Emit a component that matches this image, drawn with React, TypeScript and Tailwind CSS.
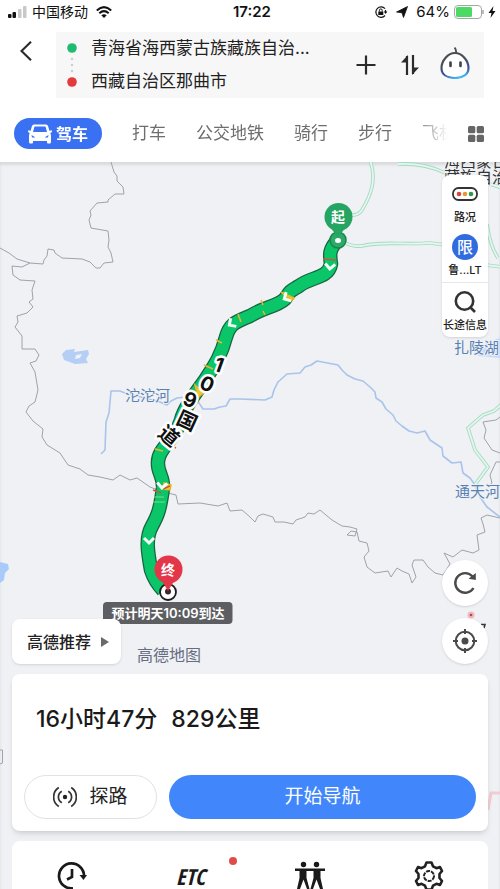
import React from "react";

const roads = [
  "M370 160 C377 180 371 195 362 210 Q358 216 350 215",
  "M344 242 Q352 247 362 246 C380 241 400 245 430 243 L446 245 L470 250",
  "M398 164 Q425 163 445 173 Q480 180 502 188",
  "M487 224 Q490 246 498 258 M486 265 L502 267",
  "M502 404 L494 411 L483 415 L468 428 L475 450 L488 467 L474 486",
];

const borders = [
  "M111 162 L114 172 L117 176 L117 181 L123 187 L124 194 L115 194 L108 200 L108 202 L97 203 L90 211 L91 215 L89 220 L91 228 L108 231 L109 240 L108 247 L111 253 L113 262 L104 263 L100 268 L96 268 L90 262 L82 259 L62 258 L55 253 L54 250 L48 249 L47 256 L44 260 L43 264 L30 263 L17 259 L9 253 L0 248",
  "M30 263 L22 267 L12 266 L13 275 L20 280 L35 281 L32 290 L33 299 L29 302 L33 307 L27 313 L17 316 L18 322 L15 327 L22 336 L22 349 L35 349 L39 355 L36 361 L30 363 L35 372 L38 390 L35 402 L29 406 L26 412 L33 421 L43 429 L42 437 L47 445 L60 453 L68 465 L80 469 L88 475 L100 477 L113 480 L120 475 L130 480 L137 478 L150 487 L160 491 L176 495 L178 504 L200 503 L218 506 L227 503 L230 511 L242 510 L250 517 L255 522 L258 516 L263 514 L273 517 L275 522 L284 522 L293 524 L296 520 L305 517 L308 513 L314 514 L320 510 L326 515 L332 520 L342 526 L350 527 L357 529 L355 536 L347 535 L351 531 L357 532 L359 541 L367 543 L369 551 L364 557 L367 567 L375 573 L388 571 L391 577 L397 568 L402 571 L409 574 L412 583 L416 577 L412 565 L414 560 L423 560 L428 567 L435 573 L443 575 L450 564 L444 553 L453 557 L462 550 L473 553 L479 550 L477 535 L485 532 L483 524 L481 518 L487 515 L500 518",
  "M500 417 L496 420 L483 422 L486 430 L484 438 L492 450 L500 453 M500 462 L496 462 L490 475 L492 483 L488 486",
  "M0 750 H2.500 V763 L0 764",
];

const river =
  "M101 454 L105 450 L106 422 L109 413 L111 391 L120 391 L125 393 L160 402 L167 405 L171 401 L177 398 L186 397 L197 400 L203 409 L214 409 L220 407 L226 406 L230 399 L240 399 L265 400 L272 397 L274 390 L278 382 L287 374 L300 373 L305 367 L311 365 L317 361 L338 365 L342 370 L347 375 L355 379 L363 381 L370 387 L375 392 L376 398 L382 402 L386 409 L393 415 L396 421 L402 426 L409 431 L417 433 L425 431 L430 440 L442 448 L443 456 L452 463 L461 462 L463 473 L470 478 L475 485 L480 497 L487 507 L500 517";

const route =
  "M338 240 C328 250 330 256 331 264 C328 279 312 276 299 286 C289 292 291 290 285 299 C276 307 264 307 250 316 C236 322 230 323 226 337 C220 360 211 370 205 380 C195 394 184 408 181 420 C175 440 158 448 158 462 C157 472 164 477 163 488 C160 510 158 515 152 526 C145 538 148 553 151 570 Q155 582 163 590";

const arrows = [
  { x: 330, y: 267, turn: 5 },
  { x: 286, y: 298, turn: 60 },
  { x: 231, y: 324, turn: 55 },
  { x: 162, y: 486, turn: 5 },
  { x: 149, y: 541, turn: 0 },
];

const roadName = [
  { char: "1", x: 219, y: 365, turn: 20 },
  { char: "0", x: 207, y: 384, turn: 25 },
  { char: "9", x: 190, y: 400, turn: 20 },
  { char: "国", x: 187, y: 421, turn: 25 },
  { char: "道", x: 169, y: 436, turn: 40 },
];

function MapCanvas() {
  return (
    <svg
      viewBox="0 162 500 727"
      preserveAspectRatio="xMidYMin slice"
      className="col-start-1 row-start-1 h-full w-full"
      fill="none"
      role="img"
      aria-label="路线地图"
    >
      <path d="M62 354 L66 350 L75 349 L74 352 L88 350 L89 354 L86 359 L88 363 L75 364 L64 360 Z" fill="#b5cef5" />
      <path d="M76 355 l6 -1 l-2 4 l-5 1z" fill="#eff1f5" />
      <path d="M0 562 L8 564 L9 569 L5 573 L4 580 L0 583 Z" fill="#a9cbfb" />
      <path d="M478 356 L482 346 L488 342 L500 338 V358 Z" fill="#c5dafb" />
      {borders.map((d) => (
        <path key={d} d={d} stroke="#9fa2a8" strokeWidth="1" strokeLinejoin="round" />
      ))}
      <path d={river} stroke="#a9c4ea" strokeWidth="1.6" strokeLinejoin="round" />
      {roads.map((d) => (
        <g key={d}>
          <path d={d} stroke="#a3dcc1" strokeWidth="3.6" />
          <path d={d} stroke="#e6f5ee" strokeWidth="1.8" />
        </g>
      ))}
      <path d="M488 810 L491 793 H500" stroke="#f0cdd2" strokeWidth="3" />

      <g fontSize="15" fill="#5a81b4" stroke="#eff1f5" strokeWidth="2" paintOrder="stroke">
        <text x="125" y="401">沱沱河</text>
        <text x="454" y="353">扎陵湖</text>
        <text x="455" y="497">通天河</text>
      </g>
      <g fontSize="16" fill="#333" stroke="#eff1f5" strokeWidth="2" paintOrder="stroke">
        <text x="444" y="167">海西蒙古族</text>
        <text x="444" y="183">藏族自治州</text>
      </g>
      <circle cx="471" cy="615" r="3.5" fill="#efb9bd" />
      <circle cx="471" cy="615" r="1.3" fill="#b5474f" />
      <path d="M481 624.500 H485 L484 628" stroke="#333" strokeWidth="1.5" />

      <path d={route} stroke="#176440" strokeWidth="14.5" strokeLinejoin="round" />
      <path d={route} stroke="#0ac668" strokeWidth="12" strokeLinejoin="round" />
      <g stroke="#e9b52c" strokeWidth="1.5">
        <path d="M261 300 l2 5 M263 311 l2 4 M238 314 l3 8 M216 340 l6 3 M204 365 l9 4 M155 449 l8 2" />
        <path d="M281 292 l13 6 l-3 3z M195 385 l9 8 l-6 4z M164 483 l7 2 l-1 5 l-7 -1z" fill="#f0c52f" />
      </g>
      <path d="M323 259 l13 1 M168 444 l8 4 M153 490 l8 3 M163 489 l7 -3" stroke="#c45a3b" strokeWidth="1.5" />
      <path d="M153 502 h12 M154 497 h10" stroke="#7ed98a" strokeWidth="1" />
      {arrows.map((a) => (
        <path
          key={a.y}
          transform={`translate(${a.x} ${a.y}) rotate(${a.turn})`}
          d="M-5 -3 L0 2 L5 -3"
          stroke="#f2fff7"
          strokeWidth="3"
        />
      ))}

      <g fontSize="20" fontWeight="700" fill="#111" stroke="#fff" strokeWidth="5" strokeLinejoin="round" paintOrder="stroke" textAnchor="middle">
        {roadName.map((l) => (
          <text key={l.char} transform={`translate(${l.x} ${l.y}) rotate(${l.turn})`} y="7">
            {l.char}
          </text>
        ))}
      </g>

      <circle cx="338" cy="240" r="8" fill="#2cab68" stroke="#17854a" strokeWidth="1.5" />
      <path d="M331 228 H345 L338 238 Z" fill="#26a562" />
      <circle cx="338.500" cy="217" r="14" fill="#26a562" />
      <ellipse cx="338" cy="240.500" rx="3" ry="2.500" fill="#fff" />
      <circle cx="168" cy="592" r="8" fill="#fff" stroke="#1b1b1d" strokeWidth="1.8" />
      <circle cx="168" cy="591.500" r="3" fill="#38282b" />
      <path d="M162 581 H174 L168 591 Z" fill="#e33648" />
      <circle cx="168.500" cy="569.500" r="14" fill="#e33648" />
      <g fontSize="14" fontWeight="700" fill="#fff" textAnchor="middle">
        <text x="338" y="222">起</text>
        <text x="168" y="575">终</text>
      </g>

      <rect x="103" y="602" width="129.500" height="22" rx="4" fill="#5c5e61" />
      <text x="168" y="618" fontSize="13" fontWeight="600" fill="#fff" textAnchor="middle">
        预计明天10:09到达
      </text>
    </svg>
  );
}

function StatusBar() {
  return (
    <div className="grid h-6 grid-cols-[1fr_auto_1fr] items-center pr-1 pl-2">
      <div className="flex items-center">
        <svg className="mr-1 h-3 w-5" viewBox="0 0 20 12" aria-hidden="true">
          <rect x="0" y="8" width="3.500" height="4" rx="1" fill="#111" />
          <rect x="4.500" y="6" width="3.500" height="6" rx="1" fill="#111" />
          <rect x="10" y="3" width="3.500" height="9" rx="1" fill="#c8c8c8" />
          <rect x="15" y="0" width="3.500" height="12" rx="1" fill="#c8c8c8" />
        </svg>
        <span className="text-sm">中国移动</span>
        <svg className="ml-2 h-3 w-4" viewBox="0 0 16 12" fill="none" stroke="#111" strokeWidth="2" aria-hidden="true">
          <path d="M0.800 4.500 Q8 -2.300 15.200 4.500 M3.300 7.200 Q8 3 12.700 7.200" />
          <path d="M5.300 9.300 Q8 7 10.700 9.300 L8 12 Z" fill="#111" stroke="none" />
        </svg>
      </div>
      <time className="text-[15px] font-semibold">17:22</time>
      <div className="flex items-center justify-end">
        <svg className="h-3 w-3.5" viewBox="0 0 14 12" fill="none" stroke="#111" strokeWidth="1.200" aria-hidden="true">
          <path d="M11 2.700 A5.200 5.200 0 1 0 11 9.500 M11.500 4 v2.600" />
          <path d="M9.800 5.500 h3.600 L11.600 8z" fill="#111" stroke="none" />
          <rect x="4.300" y="5.500" width="5" height="3.500" fill="#111" stroke="none" />
          <path d="M5.400 5.500 V4.300 a1.400 1.400 0 0 1 2.800 0 V5.500" strokeWidth="1" />
        </svg>
        <svg className="ml-2 h-3 w-3" viewBox="0 0 12 12" aria-hidden="true">
          <path d="M11.500 0.500 L7.500 11.500 L6 6.800 L0.500 6 Z" fill="#111" stroke="#111" strokeWidth="0.800" />
        </svg>
        <span className="ml-2 text-[15px]">64%</span>
        <svg className="ml-1 h-3.5 w-[30px]" viewBox="0 0 30 14" aria-hidden="true">
          <rect x="0.500" y="0.500" width="27" height="13" rx="3.500" fill="#fff" stroke="#a6a6a6" />
          <rect x="2" y="2" width="16" height="10" rx="1.500" fill="#4cd964" />
          <path d="M29 5 v4" stroke="#a6a6a6" strokeWidth="1.500" />
        </svg>
        <svg className="ml-1 h-3 w-2" viewBox="0 0 8 12" aria-hidden="true">
          <path d="M5.500 0 L0.500 7 H3.500 L2.500 12 L7.500 5 H4.500 Z" fill="#111" />
        </svg>
      </div>
    </div>
  );
}

function RouteHeader() {
  return (
    <div className="mt-2 flex pr-4">
      <button aria-label="返回" className="flex h-[38px] w-14 shrink-0 items-center justify-center pr-1">
        <svg className="h-5 w-3" viewBox="0 0 12 20" fill="none" stroke="#2b2b2b" strokeWidth="2.200" aria-hidden="true">
          <path d="M11 0.800 L1.500 10 L11 19.200" />
        </svg>
      </button>
      <div className="flex h-[66px] min-w-0 flex-1 items-center bg-[#f7f7f7] pr-3.5 pl-[11px]">
        <svg className="h-11 w-2.5 shrink-0" viewBox="0 0 10 44" aria-hidden="true">
          <circle cx="5" cy="5" r="4.800" fill="#1fbb70" />
          <g fill="#cfcfcf">
            <circle cx="5" cy="16" r="1.300" />
            <circle cx="5" cy="22" r="1.300" />
            <circle cx="5" cy="28" r="1.300" />
          </g>
          <circle cx="5" cy="39" r="4.800" fill="#e33b3b" />
        </svg>
        <div className="ml-3.5 flex min-w-0 flex-1 flex-col text-[17px] leading-[33px] text-[#222]">
          <button className="truncate text-left">青海省海西蒙古族藏族自治...</button>
          <button className="truncate text-left">西藏自治区那曲市</button>
        </div>
        <div className="flex shrink-0 items-center">
          <button aria-label="添加途经点">
            <svg className="h-5 w-5" viewBox="0 0 20 20" stroke="#2b2b2b" strokeWidth="2.200" aria-hidden="true">
              <path d="M10 0.500 V19.500 M0.500 10 H19.500" />
            </svg>
          </button>
          <button aria-label="交换起终点" className="ml-6">
            <svg className="h-5 w-5" viewBox="0 0 20 20" fill="none" stroke="#2b2b2b" strokeWidth="2.200" aria-hidden="true">
              <path d="M7 20 V1 M13 0 V19" />
              <path d="M8 0 V7.500 H1 Z M12 20 V12.500 H19 Z" fill="#2b2b2b" stroke="none" />
            </svg>
          </button>
          <button aria-label="语音助手" className="ml-5 pb-1">
            <svg className="h-8 w-[30px]" viewBox="0 0 30 32" fill="none" aria-hidden="true">
              <defs>
                <linearGradient id="botEdge" x1="0.300" y1="0" x2="0.600" y2="1">
                  <stop offset="0.350" stopColor="#4c4e55" />
                  <stop offset="0.750" stopColor="#3d51a4" />
                  <stop offset="1" stopColor="#45baf0" />
                </linearGradient>
              </defs>
              <path d="M14.500 0.500 Q16.500 2.500 16 6" stroke="#4c4e55" strokeWidth="1.800" />
              <path d="M15 6 C22 6 28.500 13.500 28.500 21 C28.500 27.500 23 31 15 31 C7 31 1.500 27.500 1.500 21 C1.500 13.500 8 6 15 6 Z" fill="#fff" stroke="url(#botEdge)" strokeWidth="2.200" />
              <path d="M10.500 15.500 v3.500 M20.500 15.500 v3.500" stroke="#3c4048" strokeWidth="2.600" strokeLinecap="round" />
            </svg>
          </button>
        </div>
      </div>
    </div>
  );
}

function TravelModes() {
  return (
    <div className="mt-5 flex items-center pr-4 pb-[13px] pl-3.5">
      <nav className="flex min-w-0 flex-1 items-center gap-[30px] overflow-hidden mask-[linear-gradient(to_right,#000_calc(100%-34px),transparent)] text-[17px] whitespace-nowrap text-[#6e6e6e]">
        <button className="flex h-[31px] shrink-0 items-center gap-1 rounded-full bg-[#3a70f2] px-3.5 text-base font-semibold text-white">
          <svg className="h-5 w-6" viewBox="0 0 24 20" aria-hidden="true">
            <path
              fillRule="evenodd"
              fill="#fff"
              d="M6 0.500 H18 Q19.500 0.500 20 2 L21.500 7 L23.500 6 L24 8 L22.300 9 Q23 10 23 12 V18 Q23 19.500 21.500 19.500 H20 Q19 19.500 19 18 V17 H5 V18 Q5 19.500 4 19.500 H2.500 Q1 19.500 1 18 V12 Q1 10 1.700 9 L0 8 L0.500 6 L2.500 7 L4 2 Q4.500 0.500 6 0.500 Z M6.500 2.500 L5 8 H19 L17.500 2.500 Z M3.500 11 L4 13.500 H7.500 Z M20.500 11 L20 13.500 H16.500 Z"
            />
          </svg>
          驾车
        </button>
        <button className="shrink-0">打车</button>
        <button className="shrink-0">公交地铁</button>
        <button className="shrink-0">骑行</button>
        <button className="shrink-0">步行</button>
        <button className="shrink-0">飞机</button>
      </nav>
      <button aria-label="全部出行方式" className="ml-5">
        <svg className="h-4 w-4" viewBox="0 0 16 16" fill="#666" aria-hidden="true">
          <rect x="0" y="0" width="7.300" height="7.300" rx="1.500" />
          <rect x="8.700" y="0" width="7.300" height="7.300" rx="1.500" />
          <rect x="0" y="8.700" width="7.300" height="7.300" rx="1.500" />
          <rect x="8.700" y="8.700" width="7.300" height="7.300" rx="1.500" />
        </svg>
      </button>
    </div>
  );
}

function MapTools() {
  return (
    <div className="flex w-[46px] flex-col self-end rounded-lg bg-white text-[11px] leading-4 font-medium whitespace-nowrap text-[#222] shadow-sm">
      <button className="flex h-[54px] flex-col items-center justify-end gap-2 pb-1">
        <svg className="h-3.5 w-[26px]" viewBox="0 0 26 14" aria-hidden="true">
          <rect x="1" y="1" width="24" height="12" rx="5.500" fill="#fff" stroke="#333" strokeWidth="1.800" />
          <circle cx="7" cy="7" r="2.300" fill="#d9473b" />
          <circle cx="13" cy="7" r="2.300" fill="#e9953a" />
          <circle cx="19" cy="7" r="2.300" fill="#2c9a44" />
        </svg>
        路况
      </button>
      <button className="flex h-[54px] flex-col items-center justify-end gap-0.5 border-b border-[#e7e7e7] pb-1">
        <span className="flex size-[26px] items-center justify-center rounded-full bg-[#316be0] text-base text-white">限</span>
        鲁...LT
      </button>
      <button className="flex h-[54px] flex-col items-center justify-end gap-1 pb-1">
        <svg className="size-[22px]" viewBox="0 0 22 22" fill="none" stroke="#333" strokeWidth="2.600" aria-hidden="true">
          <circle cx="10.500" cy="10" r="8.700" />
          <path d="M16 16 L21 21" />
        </svg>
        长途信息
      </button>
    </div>
  );
}

function MapActions() {
  const round = "flex size-[46px] items-center justify-center rounded-full bg-white shadow-sm";
  return (
    <div className="mt-auto flex items-end">
      <button className="flex h-[45px] items-center gap-2.5 rounded-lg bg-white pr-3 pl-[15px] text-base font-medium text-[#222] shadow-sm">
        高德推荐
        <svg className="h-2.5 w-2" viewBox="0 0 8 10" aria-hidden="true">
          <path d="M0 0 L8 5 L0 10 Z" fill="#6a6a6a" />
        </svg>
      </button>
      <span className="ml-4 text-base leading-[18px] text-[#686d82]">高德地图</span>
      <div className="ml-auto flex flex-col gap-3">
        <button aria-label="刷新路线" className={round}>
          <svg className="size-6" viewBox="0 0 24 24" fill="none" stroke="#4a4a4a" strokeWidth="2.400" aria-hidden="true">
            <path d="M20.500 17 A9.800 9.800 0 1 1 19.500 5.500" />
            <path d="M22.800 2 V9 L15.500 7.800 Z" fill="#4a4a4a" stroke="none" />
          </svg>
        </button>
        <button aria-label="定位" className={round}>
          <svg className="size-6" viewBox="0 0 24 24" fill="none" stroke="#4a4a4a" strokeWidth="2" aria-hidden="true">
            <circle cx="12" cy="12" r="9.300" />
            <circle cx="12" cy="12" r="3.500" fill="#4a4a4a" stroke="none" />
            <path d="M12 0 V5 M12 19 V24 M0 12 H5 M19 12 H24" />
          </svg>
        </button>
      </div>
    </div>
  );
}

function RouteCard() {
  return (
    <section className="mt-2.5 rounded-lg bg-white px-3 pt-7 pb-3 shadow-md">
      <h1 className="flex gap-3.5 px-3 text-[23px] leading-[34px] font-medium text-[#1a1a1a]">
        <span>16小时47分</span>
        <span>829公里</span>
      </h1>
      <div className="mt-[39px] flex gap-3 text-[19px]">
        <button className="flex h-11 w-[133px] items-center justify-center gap-3 rounded-full border border-[#e2e2e2] text-[#222]">
          <svg className="h-6 w-6" viewBox="0 0 24 24" fill="none" stroke="#333" strokeWidth="1.700" aria-hidden="true">
            <circle cx="12" cy="12" r="2.200" fill="#222" stroke="none" />
            <path d="M8.800 6.300 A6.500 6.500 0 0 0 8.800 17.700 M15.200 6.300 A6.500 6.500 0 0 1 15.200 17.700" />
            <path d="M5.800 2.500 A11.300 11.300 0 0 0 5.800 21.500 M18.200 2.500 A11.300 11.300 0 0 1 18.200 21.500" />
          </svg>
          探路
        </button>
        <button className="h-11 flex-1 rounded-full bg-[#4187fb] text-white">开始导航</button>
      </div>
    </section>
  );
}

function Shortcuts() {
  return (
    <section className="mt-2.5 grid h-12 grid-cols-4 justify-items-center overflow-hidden rounded-t-lg bg-white pt-5">
      <button aria-label="出发时间">
        <svg className="size-[30px]" viewBox="0 0 30 30" fill="none" stroke="#1a1a1a" strokeWidth="2.700" aria-hidden="true">
          <path d="M16 27.300 A12.500 12.500 0 1 1 27 15" />
          <path d="M22.500 14 H30 L26.500 19 Z" fill="#1a1a1a" stroke="none" />
          <path d="M15 8 V16 L10 18.500" />
        </svg>
      </button>
      <button className="relative h-[30px] text-[22px] leading-[28px] font-bold text-[#1a1a1a] italic">
        <span className="font-['Open_Sans_Condensed','Roboto_Condensed','Liberation_Sans_Narrow','Liberation_Sans',sans-serif]">ETC</span>
        <span className="absolute -top-1 -right-8 size-2 rounded-full bg-[#df4b4b]" />
      </button>
      <button aria-label="组队出行">
        <svg className="size-[30px]" viewBox="0 0 30 30" fill="#1a1a1a" aria-hidden="true">
          <circle cx="8.500" cy="3.500" r="2.700" />
          <circle cx="21.500" cy="3.500" r="2.700" />
          <path d="M0 7.500 H30 V10 H25.500 V17 L28 28 H25 L21.500 18.500 L18 28 H15.500 L18.500 17 V10 H11.500 V17 L14.500 28 H12 L8.500 18.500 L5 28 H2 L4.500 17 V10 H0 Z" />
        </svg>
      </button>
      <button aria-label="设置">
        <svg className="size-[30px]" viewBox="0 0 30 30" fill="none" stroke="#222" strokeWidth="2.600" aria-hidden="true">
          <path
            strokeLinejoin="round"
            d="M12.500 1.500 H17.500 L19 5.300 L22.500 7.200 L26 6 L28 10 L25.500 13 V17 L28 20 L26 24 L22.500 22.800 L19 24.700 L17.500 28.500 H12.500 L11 24.700 L7.500 22.800 L4 24 L2 20 L4.500 17 V13 L2 10 L4 6 L7.500 7.200 L11 5.300 Z"
          />
          <circle cx="15" cy="15" r="5" strokeWidth="2" strokeDasharray="4 1" />
        </svg>
      </button>
    </section>
  );
}

export default function App() {
  return (
    <div className="flex h-screen min-h-[760px] flex-col overflow-hidden bg-white font-[Inter,'Noto_Sans_CJK_SC',sans-serif] text-[#111]">
      <header className="shrink-0">
        <StatusBar />
        <RouteHeader />
        <TravelModes />
      </header>
      <main className="grid min-h-0 flex-1 grid-rows-[minmax(0,1fr)] bg-[#eff1f5] shadow-[inset_0_3px_3px_#d9dadd]">
        <MapCanvas />
        <div className="z-10 col-start-1 row-start-1 flex flex-col px-3 pt-[13px]">
          <MapTools />
          <MapActions />
          <RouteCard />
          <Shortcuts />
        </div>
      </main>
    </div>
  );
}
